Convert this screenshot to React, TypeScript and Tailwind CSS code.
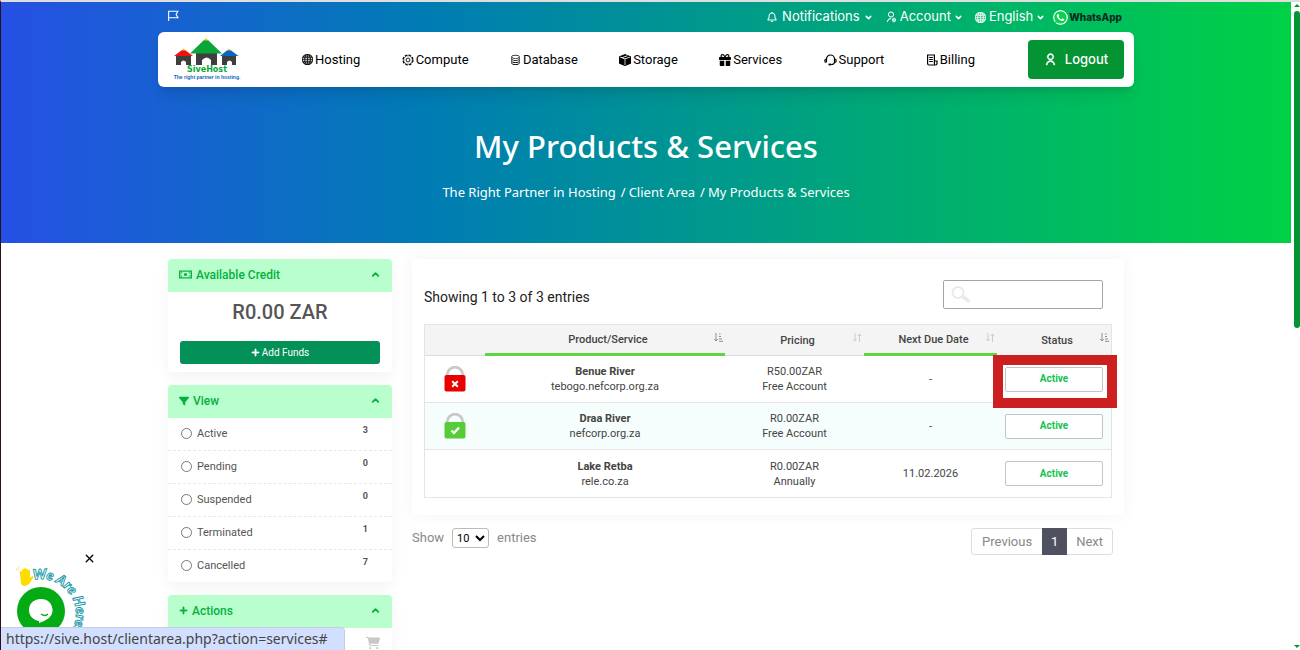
import React, { useState } from 'react';
import { RiFlag2Line, RiUserLine, RiUserSettingsLine } from 'react-icons/ri';
import { BsBoxSeamFill, BsDatabase, BsGlobe, BsWhatsapp } from 'react-icons/bs';
import { BiBell } from 'react-icons/bi';
import { FaCartShopping, FaFilter, FaGift, FaPlus } from 'react-icons/fa6';
import { ChevronDown, ChevronUp, X } from 'lucide-react';

const GearIcon = () => (
  <svg width="12" height="12" viewBox="0 0 12 12" fill="none" stroke="currentColor" strokeWidth="0.900">
    <circle cx="6" cy="6" r="5" strokeWidth="1.200" strokeDasharray="2.600 1.320" />
    <circle cx="6" cy="6" r="4.300" strokeWidth="0.600" />
    <circle cx="6" cy="6" r="1.900" />
  </svg>
);

const SupportIcon = () => (
  <svg width="13" height="12" viewBox="0 0 13 12" fill="none" stroke="currentColor" strokeWidth="1.200">
    <path d="M2.500 8V5a4 4 0 0 1 8 0v3q0 2.500-3.500 2.500" />
    <path d="M2.500 5.200Q.8 5.200.8 6.800t1.700 1.600M10.500 5.200q1.700 0 1.700 1.600t-1.700 1.600" />
    <path d="M4.500 10.500h2.500" strokeWidth="1.800" />
  </svg>
);

const BillIcon = () => (
  <svg width="12" height="12" viewBox="0 0 12 12" fill="none" stroke="currentColor" strokeWidth="1.200">
    <path d="M1.600 1h6.800v8.500q0 1.500 1.200 1.500H3q-1.400 0-1.400-1.500z" />
    <path d="M3.200 3.500h3.600M3.200 5.500h3.600M3.200 7.500h3.600M9.600 11q1.400 0 1.400-1.500V7H8.400" />
  </svg>
);

const MoneyIcon = () => (
  <svg width="13" height="9" viewBox="0 0 13 9" fill="none" stroke="currentColor">
    <rect x=".6" y="1.100" width="11.800" height="6.800" strokeWidth="1.200" />
    <path d="M1 3.200h1.800V1.500M1 5.800h1.800v1.700M12 3.200h-1.800V1.500M12 5.800h-1.800v1.700" strokeWidth=".7" />
    <circle cx="6.500" cy="4.500" r="1.600" fill="currentColor" stroke="none" />
  </svg>
);

const navItems = [
  { label: 'Hosting', icon: <BsGlobe size={11} strokeWidth={0.500} /> },
  { label: 'Compute', icon: <GearIcon /> },
  { label: 'Database', icon: <BsDatabase size={11} /> },
  { label: 'Storage', icon: <BsBoxSeamFill size={12} /> },
  { label: 'Services', icon: <FaGift size={12} /> },
  { label: 'Support', icon: <SupportIcon /> },
  { label: 'Billing', icon: <BillIcon /> },
];

const filters = [
  { label: 'Active', count: 3 },
  { label: 'Pending', count: 0 },
  { label: 'Suspended', count: 0 },
  { label: 'Terminated', count: 1 },
  { label: 'Cancelled', count: 7 },
];

const services = [
  { name: 'Benue River', domain: 'tebogo.nefcorp.org.za', price: 'R50.00ZAR', cycle: 'Free Account', due: '-', ssl: 'bad' },
  { name: 'Draa River', domain: 'nefcorp.org.za', price: 'R0.00ZAR', cycle: 'Free Account', due: '-', ssl: 'ok' },
  { name: 'Lake Retba', domain: 'rele.co.za', price: 'R0.00ZAR', cycle: 'Annually', due: '11.02.2026', ssl: '' },
];

const Logo = () => (
  <a href="#" className="flex w-[78px] flex-col items-center pb-0.5">
    <svg width="66" height="28" viewBox="0 0 66 28">
      <path d="M2 17h15v10h-5v-3q-2.500-3-5 0v3H2z" fill="#3f3f3f" />
      <path d="M22 15h21v12h-6v-5q-4-5-9 0v5h-6z" fill="#3f3f3f" />
      <path d="M48 17h14v10h-4v-3q-2.500-3-5 0v3h-5z" fill="#3f3f3f" />
      <path d="M8 12h3l8 6H0z" fill="#ee1111" />
      <path d="M30 2h4l14 13.500H16z" fill="#0aa637" />
      <path d="M53.500 12h3l8 6H46z" fill="#0a66c2" />
      <path d="M32 0l2.500 2.500h-5zM9.500 10.500l2 2h-4zM55 10.500l2 2h-4z" fill="#f3c21b" />
    </svg>
    <span className="font-['DejaVu_Sans',sans-serif] text-[8px] leading-[8px] font-bold text-[#0aa637]">SiveHost</span>
    <span className="font-['Liberation_Sans',sans-serif] text-[5px] leading-[6px] font-bold whitespace-nowrap text-[#0a66c2]">The right partner in hosting.</span>
  </a>
);

const SslLock: React.FC<{ state: string }> = ({ state }) => (
  <svg width="22" height="26" viewBox="0 0 22 26" className="mx-auto">
    <path d="M3.200 12V9a7.800 7.800 0 0 1 15.600 0v3" fill="none" stroke="#c8c8c8" strokeWidth="2.800" />
    <rect x=".5" y="9" width="21" height="16.500" rx="2" fill={state === 'ok' ? '#55cc38' : '#e80000'} />
    {state === 'ok' ? (
      <path d="M7.500 17.500l2.500 2.500 5-5.500" fill="none" stroke="#fff" strokeWidth="2.300" />
    ) : (
      <path d="M8.200 15.200l5.600 5.600M13.800 15.200l-5.600 5.600" fill="none" stroke="#fff" strokeWidth="2" />
    )}
  </svg>
);

const SortIcon: React.FC<{ sorted?: boolean }> = ({ sorted }) => (
  <svg width="9" height="9" viewBox="0 0 9 9" fill="none" stroke={sorted ? '#8f8f8f' : '#cccccc'} className="absolute top-2 right-0.5">
    <path d="M2 0v8M0.300 6L2 8l1.700-2" />
    {sorted ? <path d="M5 1h1.500M5 3.500h2M5 6h3M5 8.300h4" /> : <path d="M6.500 9V1M4.800 3l1.700-2 1.700 2" />}
  </svg>
);

const PanelHeader: React.FC<{ icon: React.ReactNode; title: string }> = ({ icon, title }) => (
  <button className="flex h-[33px] w-full items-center gap-1 rounded-t-sm bg-[#b9ffce] px-[11px] pb-0.5 text-left font-medium text-[#06b03f]">
    {icon}
    <span className="flex-1 text-xs">{title}</span>
    <ChevronUp size={11} strokeWidth={4} />
  </button>
);

const ChatWidget = () => (
  <div className="absolute bottom-0 left-[11px] h-[98px] w-[84px]">
    <button aria-label="Close" className="absolute top-0 right-0 text-black">
      <X size={13} strokeWidth={2.500} />
    </button>
    <svg width="84" height="98" viewBox="0 0 84 98">
      <defs>
        <path id="arc" d="M21 28A35 35 0 0 1 59 80" />
      </defs>
      <text fontFamily="Lato" fontWeight="900" fontStyle="italic" fontSize="14" fill="#fff" stroke="#1397a8" strokeWidth="0.900">
        <textPath href="#arc">We Are Here!</textPath>
      </text>
      <path d="M8 22q-1-3 1-3l1 1q0-4 2-3 1-2 2 0 2-1 2 1 2-1 2 2v6l2-2q2 0 1 2l-4 6q-5 4-8 0z" fill="#ffdc00" />
      <path d="M4 19l1-3M6 18l1-4" stroke="#ffe98a" />
      <circle cx="29" cy="59" r="24" fill="#05ab14" />
      <path d="M29 47a11 11 0 0 1 8 19q-4 3-10 5v-2A11 11 0 0 1 29 47z" fill="#fff" />
      <path d="M29 62q4 3 7 0" fill="none" stroke="#05ab14" strokeWidth="1.500" />
    </svg>
  </div>
);

const App: React.FC = () => {
  const [filter, setFilter] = useState('');
  const [search, setSearch] = useState('');

  return (
    <div className="relative flex h-screen overflow-hidden border-t-2 border-l border-t-[#dedede] border-l-[#2c1020] bg-white font-[Roboto,sans-serif] text-[#555]">
      <main className="min-w-0 flex-1">
        {/* Hero */}
        <header className="h-[241px] bg-[linear-gradient(90deg,#2650e4_0%,#007cb4_33%,#00a67a_66%,#00d145_100%)]">
          <div className="mx-auto max-w-[976px]">
            <div className="flex h-[30px] items-center gap-3 pr-3 pl-[9px] text-[13px] text-white">
              <a href="#" aria-label="Flag" className="flex-1 pb-1"><RiFlag2Line size={13} /></a>
              <a href="#" className="flex items-center gap-1">
                <BiBell size={12} /><span className="font-[Inter,sans-serif]">Notifications</span><ChevronDown size={9} strokeWidth={4} />
              </a>
              <a href="#" className="flex items-center gap-[3px]">
                <RiUserSettingsLine size={12} /><span className="font-[Inter,sans-serif]">Account</span><ChevronDown size={9} strokeWidth={4} />
              </a>
              <a href="#" className="flex items-center gap-[3px]">
                <BsGlobe size={11} strokeWidth={0.500} /><span className="font-[Inter,sans-serif]">English</span><ChevronDown size={9} strokeWidth={4} />
              </a>
              <a href="#" className="-ml-1 flex items-center font-[Inter,sans-serif] text-[10px] font-extrabold text-[#0b2b20]">
                <BsWhatsapp size={15} className="mr-px rounded-full bg-[#0bd150] text-white" />WhatsApp
              </a>
            </div>
            <nav className="flex h-[55px] items-center rounded-md bg-white px-[10px] text-[13px] text-black shadow-lg">
              <Logo />
              <div className="flex flex-1 items-center justify-between pr-[53px] pl-14">
                {navItems.map(item => (
                  <a key={item.label} href="#" className="flex items-center gap-0.5">
                    {item.icon}
                    {item.label}
                  </a>
                ))}
              </div>
              <button className="flex h-[39px] w-24 items-center justify-center gap-2 rounded bg-[#059433] font-[Inter,sans-serif] font-medium text-white">
                <RiUserLine size={13} strokeWidth={1} /> Logout
              </button>
            </nav>
          </div>
          <div className="flex flex-col items-center pt-[39px] font-['Noto_Sans',sans-serif] text-white">
            <h1 className="text-[31px] leading-10 font-medium">My Products &amp; Services</h1>
            <div className="mt-4 flex gap-[3px] text-[13px] leading-5">
              <a href="#">The Right Partner in Hosting</a>
              <span className="pl-0.5">/</span>
              <a href="#">Client Area</a>
              <span className="pl-0.5">/</span>
              <span>My Products &amp; Services</span>
            </div>
          </div>
        </header>

        <div className="mx-auto flex max-w-[956px] items-start gap-5 pt-4">
          {/* Sidebar */}
          <aside className="flex w-56 flex-col gap-[13px]">
            <section className="rounded-sm bg-white shadow-[0_5px_15px_rgba(0,0,0,0.05)]">
              <PanelHeader icon={<MoneyIcon />} title="Available Credit" />
              <div className="px-3 pt-2 pb-2">
                <p className="text-center text-xl leading-6 font-medium">R0.00 ZAR</p>
                <button className="mt-[17px] flex h-[23px] w-full items-center justify-center gap-0.5 rounded-[3px] bg-[#039158] text-[10px] text-white">
                  <FaPlus size={9} stroke="currentColor" strokeWidth={40} /> Add Funds
                </button>
              </div>
            </section>

            <section className="rounded-sm bg-white shadow-[0_5px_15px_rgba(0,0,0,0.05)]">
              <PanelHeader icon={<FaFilter size={10} />} title="View" />
              {filters.map(f => (
                <label key={f.label} className="flex h-[33px] items-center border-b border-dashed border-[#e8e8e8] pr-6 pl-[13px] text-[11px] last:h-8 last:border-b-0">
                  <input
                    type="radio"
                    name="status"
                    checked={filter === f.label}
                    onChange={() => setFilter(f.label)}
                    className="mr-[5px] mb-0.5 size-[11px] appearance-none rounded-full border border-[#777] checked:border-4"
                  />
                  <span className="flex-1">{f.label}</span>
                  <span className="pb-[7px] text-[9px] font-bold">{f.count}</span>
                </label>
              ))}
            </section>

            <section className="rounded-sm bg-white shadow-[0_5px_15px_rgba(0,0,0,0.05)]">
              <PanelHeader icon={<FaPlus size={9} stroke="currentColor" strokeWidth={40} />} title="Actions" />
              <div className="flex justify-end px-3 py-2 text-[#c8c8c8]">
                <FaCartShopping size={14} />
              </div>
            </section>
          </aside>

          {/* Services table */}
          <div className="min-w-0 flex-1">
            <section className="bg-white px-3 pt-[21px] pb-[17px] shadow-[0_0_15px_rgba(0,0,0,0.05)]">
              <div className="flex items-center justify-between pr-[9px]">
                <p className="pt-1 text-sm text-[#222]">Showing 1 to 3 of 3 entries</p>
                <div className="relative">
                  <svg width="20" height="17" viewBox="0 0 20 17" className="absolute top-[6px] left-2" fill="none" stroke="#e8eaeb">
                    <circle cx="7" cy="6.500" r="5.500" strokeWidth="2" />
                    <path d="M11.500 10.500l7 5" strokeWidth="3.500" />
                  </svg>
                  <input
                    type="text"
                    aria-label="Search"
                    value={search}
                    onChange={e => setSearch(e.target.value)}
                    className="block h-[29px] w-40 rounded-[2px] border border-[#a5a5a5] bg-transparent pr-2 pl-8 text-[11px] outline-none"
                  />
                </div>
              </div>
              <table className="mt-[15px] w-full table-fixed border-separate border-spacing-0 border border-[#e4e4e4] text-center text-[11px] leading-[15px] text-[#444]">
                <colgroup>
                  <col className="w-[60px]" />
                  <col />
                  <col className="w-[139px]" />
                  <col className="w-[133px]" />
                  <col className="w-[114px]" />
                </colgroup>
                <thead className="bg-[#f4f4f4]">
                  <tr className="h-[31px]">
                    <th className="border-b border-[#dcdcdc]"></th>
                    <th className="relative border-b-3 border-[#5dd643] pl-[6px] font-medium">Product/Service<SortIcon sorted /></th>
                    <th className="relative border-b border-[#dcdcdc] pl-[6px] font-medium">Pricing<SortIcon /></th>
                    <th className="relative border-b-3 border-[#5dd643] pl-[6px] font-medium">Next Due Date<SortIcon /></th>
                    <th className="relative border-b border-[#dcdcdc] pl-[6px] font-medium">Status<SortIcon sorted /></th>
                  </tr>
                </thead>
                <tbody>
                  {services.map((s, i) => (
                    <tr key={s.name} className="h-[47px] even:bg-[#f6fdfd] [&:not(:last-child)>td]:border-b [&>td]:border-[#e4e4e4]">
                      <td>{s.ssl && <SslLock state={s.ssl} />}</td>
                      <td><div className="font-bold">{s.name}</div>{s.domain}</td>
                      <td>{s.price}<br />{s.cycle}</td>
                      <td>{s.due}</td>
                      <td className="px-2">
                        <div className="relative">
                          <button className="block h-[25px] w-full rounded-[2px] border border-[#c4c4c4] bg-white text-[10px] leading-3 font-bold text-[#12c24d]">Active</button>
                          {i === 0 && <div className="pointer-events-none absolute -top-3 -right-[14px] -bottom-4 -left-3 border-10 border-[#cc2020]" />}
                        </div>
                      </td>
                    </tr>
                  ))}
                </tbody>
              </table>
            </section>

            <div className="mt-[13px] flex items-start justify-between pr-[11px] text-[13px] text-[#888]">
              <label className="flex items-center gap-2">
                Show
                <select className="h-5 w-[37px] rounded-[3px] border border-[#bbb] bg-white text-[11px] text-black">
                  <option>10</option>
                  <option>25</option>
                </select>
                entries
              </label>
              <div className="flex h-[27px] items-stretch rounded-[3px] border border-[#ddd]">
                <button className="px-[10px]">Previous</button>
                <button className="-my-px w-[25px] bg-[#4f5160] text-white">1</button>
                <button className="px-[9px]">Next</button>
              </div>
            </div>
          </div>
        </div>
      </main>

      {/* Scroll track */}
      <div className="flex w-[9px] flex-col items-center bg-white pt-[2px] pl-0.5">
        <svg width="6" height="3" viewBox="0 0 6 3"><path d="M3 0l3 3H0z" fill="#059433" /></svg>
        <div className="mt-1 h-[49%] w-1.5 rounded-full bg-[#059433]" />
        <svg width="6" height="3" viewBox="0 0 6 3" className="mt-auto mb-0.5"><path d="M0 0h6L3 3z" fill="#059433" /></svg>
      </div>

      <ChatWidget />
      <div className="absolute bottom-0 left-0 rounded-tr border-t border-r border-[#c5cde6] bg-[#d3dfff] pr-4 pl-[5px] font-['Noto_Sans',sans-serif] text-sm leading-[22px] text-[#444]">
        https://sive.host/clientarea.php?action=services#
      </div>
    </div>
  );
};

export default App;
